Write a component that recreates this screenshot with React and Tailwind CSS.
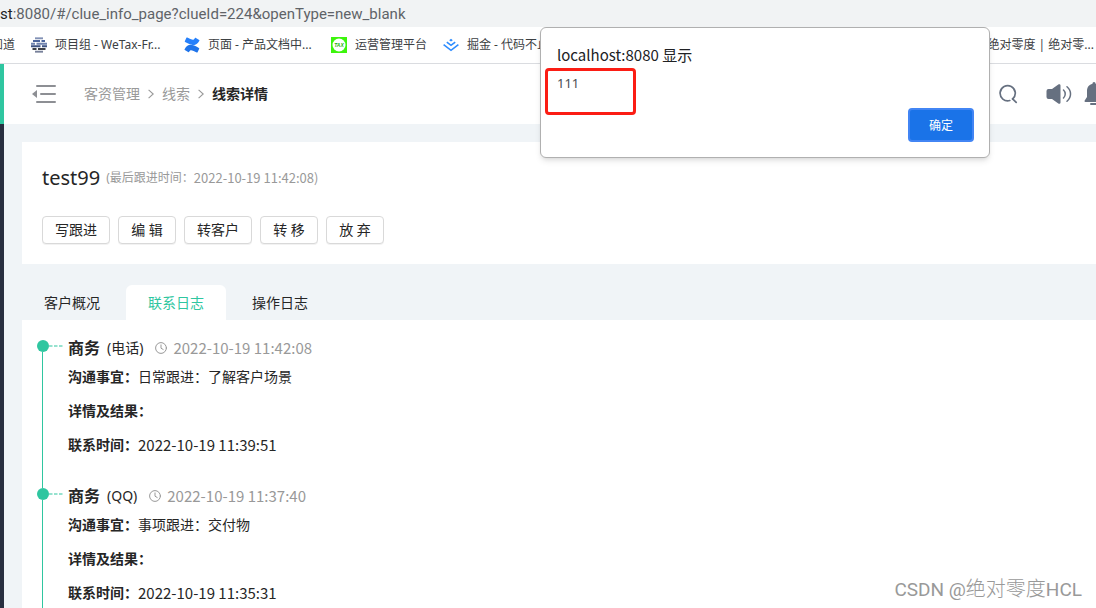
import React from 'react';

const entries = [
  { role: '商务', channel: '(电话)', date: '2022-10-19 11:42:08', topic: '日常跟进：了解客户场景', contact: '2022-10-19 11:39:51' },
  { role: '商务', channel: '(QQ)', date: '2022-10-19 11:37:40', topic: '事项跟进：交付物', contact: '2022-10-19 11:35:31' },
];

const actions = ['写跟进', '编 辑', '转客户', '转 移', '放 弃'];

function WeTaxIcon() {
  return (
    <svg className="size-4 shrink-0" viewBox="0 0 16 16" fill="none" strokeWidth="1.9">
      <path d="M4 1.300h8" stroke="#8291b5" />
      <path d="M2 4h7M10.500 4H14" stroke="#4b649b" />
      <path d="M0 6.700h4M5.500 6.700H16" stroke="#6f83af" />
      <path d="M0 9.300h9.500M11 9.300h5" stroke="#3e5382" />
      <path d="M1.500 12h4M7 12h7.500" stroke="#3d4047" />
      <path d="M4 14.700h8" stroke="#77809a" />
    </svg>
  );
}

function ConfluenceIcon() {
  return (
    <svg className="size-4 shrink-0" viewBox="0 0 16 16">
      <path d="M.6 12.200c-.2.300-.1.700.2.900l3.300 2c.3.200.7.100.9-.2 1.300-2.200 2-2.100 4.600-.9l3.100 1.500c.3.200.7 0 .9-.3l1.600-3.500c.1-.3 0-.7-.3-.8C7.900 7.500 4.400 5.800.6 12.200z" fill="#1f74ea" />
      <path d="M15.400 3.800c.2-.3.100-.7-.2-.9l-3.300-2c-.3-.2-.7-.1-.9.200-1.300 2.200-2 2.100-4.600.9L3.300.500c-.3-.2-.7 0-.9.300L.8 4.300c-.1.300 0 .7.300.8 7 3.400 10.500 5.100 14.300-1.300z" fill="#2680fb" />
    </svg>
  );
}

function TaxIcon() {
  return (
    <svg className="size-4 shrink-0" viewBox="0 0 16 16">
      <rect width="16" height="16" fill="#3df50c" />
      <circle cx="8" cy="8" r="6.500" fill="#fff" />
      <text x="8" y="9.900" textAnchor="middle" fontSize="5" fontWeight="bold" fontStyle="italic" fontFamily="Liberation Sans, sans-serif" fill="#25b50a">TAX</text>
    </svg>
  );
}

function JuejinIcon() {
  return (
    <svg className="size-4 shrink-0" viewBox="0 0 16 16" fill="none" stroke="#2d8cff" strokeWidth="1.600">
      <path d="M8 1.800l1.800 1.400L8 4.600 6.200 3.200z" fill="#2d8cff" stroke="none" />
      <path d="M3.800 5.100L8 8.300l4.200-3.200" />
      <path d="M.6 7.600L8 13.300l7.400-5.700" />
    </svg>
  );
}

function FoldIcon() {
  return (
    <svg className="h-5 w-6" viewBox="0 0 24 20">
      <path d="M5 2h18M9 10h14M5 18h18" stroke="#8d8f94" strokeWidth="2" strokeLinecap="round" />
      <path d="M0 10l5-4v8z" fill="#8d8f94" />
    </svg>
  );
}

function Chevron() {
  return (
    <svg className="mx-2 h-3 w-1.5" viewBox="0 0 6 12" fill="none" stroke="#999" strokeWidth="1.100">
      <path d="M.6 1.800L5.200 6 .6 10.200" />
    </svg>
  );
}

function SearchIcon() {
  return (
    <svg className="size-5" viewBox="0 0 20 20" fill="none" stroke="#667080" strokeWidth="1.700" strokeLinecap="round">
      <path d="M11.800 16.500A7.600 7.600 0 1 1 14.600 15" />
      <path d="M14.600 14.900l3.600 3.500" />
    </svg>
  );
}

function SpeakerIcon() {
  return (
    <svg className="h-[22px] w-[26px]" viewBox="0 0 26 22">
      <path d="M2.500 6H6l6.300-4.500c1-.7 2.200-.3 2.200 1v17c0 1.300-1.200 1.700-2.200 1L6 16H2.500A2 2 0 0 1 .5 14V8a2 2 0 0 1 2-2z" fill="#667080" />
      <path d="M17.500 7c2.300 2.200 2.300 5.800 0 8M21 3.800c4.700 4 4.700 10.400 0 14.400" fill="none" stroke="#667080" strokeWidth="1.500" strokeLinecap="round" />
    </svg>
  );
}

function BellIcon() {
  return (
    <svg className="h-6 w-5" viewBox="0 0 20 24">
      <path d="M10 0c1 0 1.500.7 1.500 1.800 3.500.8 5.500 3.600 5.500 7.200v6l2.300 3.500c.4.700.2 1.500-.8 1.500h-17c-1 0-1.200-.8-.8-1.500L3 15V9c0-3.600 2-6.400 5.500-7.200C8.500.7 9 0 10 0z" fill="#667080" />
      <path d="M7 22h6" stroke="#667080" strokeWidth="2" strokeLinecap="round" />
    </svg>
  );
}

function ClockIcon() {
  return (
    <svg className="ml-3 mr-1.5 size-3" viewBox="0 0 12 12" fill="none" stroke="#999" strokeLinecap="round">
      <circle cx="6" cy="6" r="5.400" />
      <path d="M6 2.900v3.300l2.200 1.300" />
    </svg>
  );
}

function BrowserBar() {
  return (
    <div className="whitespace-nowrap">
      <div className="flex h-[27px] items-center bg-[#f1f3f4] font-['Roboto',sans-serif] text-[15px] leading-6 text-[#5f6368]">
        <span><span className="text-[#202124]">st</span>:8080/#/clue_info_page?clueId=224&amp;openType=new_blank</span>
      </div>
      <nav className="flex h-[37px] items-center border-b border-[#dadce0] bg-white text-xs text-[#3c4043]">
        <a href="#zhidao" className="mr-4 flex w-[15px] shrink-0 justify-end overflow-hidden">知道</a>
        <a href="#project" className="flex w-[153px] shrink-0 items-center gap-2"><WeTaxIcon />项目组 - WeTax-Fr...</a>
        <a href="#pages" className="flex w-[147px] shrink-0 items-center gap-2"><ConfluenceIcon />页面 - 产品文档中...</a>
        <a href="#platform" className="flex w-28 shrink-0 items-center gap-2"><TaxIcon />运营管理平台</a>
        <a href="#juejin" className="flex items-center gap-2"><JuejinIcon />掘金 - 代码不止</a>
        <a href="#blog" className="ml-auto pr-0.5">绝对零度 | 绝对零...</a>
      </nav>
    </div>
  );
}

function Header() {
  return (
    <header className="flex h-15 items-center overflow-hidden bg-white pl-7">
      <button aria-label="收起菜单"><FoldIcon /></button>
      <nav className="ml-7 flex items-center text-sm text-[#999]">
        <a href="#customer">客资管理</a>
        <Chevron />
        <a href="#clue">线索</a>
        <Chevron />
        <span className="font-bold text-[#262626]">线索详情</span>
      </nav>
      <div className="-mr-2 ml-auto flex items-center">
        <button aria-label="搜索" className="mr-7"><SearchIcon /></button>
        <button aria-label="声音" className="mr-3"><SpeakerIcon /></button>
        <button aria-label="通知"><BellIcon /></button>
      </div>
    </header>
  );
}

function Entry({ entry }) {
  return (
    <li className="flex">
      <div className="flex w-[46px] shrink-0">
        <div className="ml-[15px] flex w-3 flex-col pt-1">
          <div className="size-3 shrink-0 rounded-full bg-[#2fc6a0]" />
          <div className="-mb-1 ml-[5px] w-px flex-1 bg-[#2fc6a0]" />
        </div>
        <svg className="mt-[9px] h-0.5 w-3.5" viewBox="0 0 14 2"><path d="M0 1h3.500M5 1h3.500M10 1h3.500" stroke="#2fc6a0" strokeWidth="1.200" /></svg>
      </div>
      <div className="pb-[22px] text-sm text-[#262626]">
        <h3 className="flex h-6 items-center">
          <span className="text-base font-bold">{entry.role}</span>
          <span className="ml-[7px]">{entry.channel}</span>
          <ClockIcon />
          <time className="font-['Noto_Sans_CJK_SC',sans-serif] text-[15px] text-[#999]">{entry.date}</time>
        </h3>
        <p className="leading-[34px]"><b>沟通事宜：</b>{entry.topic}</p>
        <p className="leading-[34px]"><b>详情及结果：</b></p>
        <p className="flex leading-[34px]"><b>联系时间：</b><time className="font-['Noto_Sans_CJK_SC',sans-serif] text-[15px]">{entry.contact}</time></p>
      </div>
    </li>
  );
}

function AlertDialog() {
  return (
    <div role="alertdialog" aria-labelledby="alert-title" className="absolute left-[540px] top-[27px] w-[450px] rounded-md border border-[#b0b0b0] bg-white px-4 py-[15px] shadow-md">
      <h2 id="alert-title" className="font-['Noto_Sans_CJK_SC',sans-serif] text-[15px] leading-6 text-[#202124]">localhost:8080 显示</h2>
      <p className="mt-1.5 text-[13px] leading-5 text-[#4a4d51]">111</p>
      <div className="-mr-px mt-[15px] flex justify-end">
        <button className="h-[34px] w-[66px] rounded border-2 border-[#4285f4] bg-[#1a73e8] pt-0.5 text-xs text-white">确定</button>
      </div>
      <div className="absolute left-1 top-10 h-[47px] w-[91px] rounded-sm border-3 border-[#fb1d14]" />
    </div>
  );
}

export default function App() {
  return (
    <div className="relative flex h-screen flex-col overflow-hidden bg-[#f0f4f7] font-['Noto_Sans','Noto_Sans_CJK_SC',sans-serif]">
      <BrowserBar />
      <div className="flex min-h-0 flex-1">
        <aside className="w-1 shrink-0 bg-[#282f40]"><div className="h-15 bg-[#2fc6a0]" /></aside>
        <div className="min-w-0 flex-1">
          <Header />
          <main className="pl-[18px] pt-[18px]">
            <section className="bg-white p-5">
              <div className="flex h-8 items-center">
                <h1 className="text-xl text-[#262626]">test99</h1>
                <p className="ml-1.5 flex items-center text-xs text-[#999]">(最后跟进时间：<span className="font-['Noto_Sans_CJK_SC',sans-serif] text-[13px]">2022-10-19 11:42:08)</span></p>
              </div>
              <div className="mt-[22px] flex gap-2">
                {actions.map((label) => (
                  <button key={label} className="h-7 min-w-[58px] rounded border border-[#d9d9d9] bg-white px-3 text-sm leading-5 text-[#262626] shadow-2xs">{label}</button>
                ))}
              </div>
            </section>
            <div role="tablist" className="mt-[21px] flex gap-1 text-sm text-[#262626]">
              <button role="tab" aria-selected="false" className="h-[35px] w-25">客户概况</button>
              <button role="tab" aria-selected="true" className="h-[35px] w-25 rounded-t-md bg-white text-[#2fc6a0]">联系日志</button>
              <button role="tab" aria-selected="false" className="h-[35px] w-25">操作日志</button>
            </div>
            <ol className="bg-white pt-4">
              {entries.map((entry) => <Entry key={entry.date} entry={entry} />)}
            </ol>
          </main>
        </div>
      </div>
      <AlertDialog />
      <div className="absolute bottom-1.5 right-3.5 font-['Roboto','Noto_Sans_CJK_SC',sans-serif] text-[19px] leading-6 text-[#999]">CSDN @<span className="text-xl leading-6 font-light">绝对零度</span>HCL</div>
    </div>
  );
}
